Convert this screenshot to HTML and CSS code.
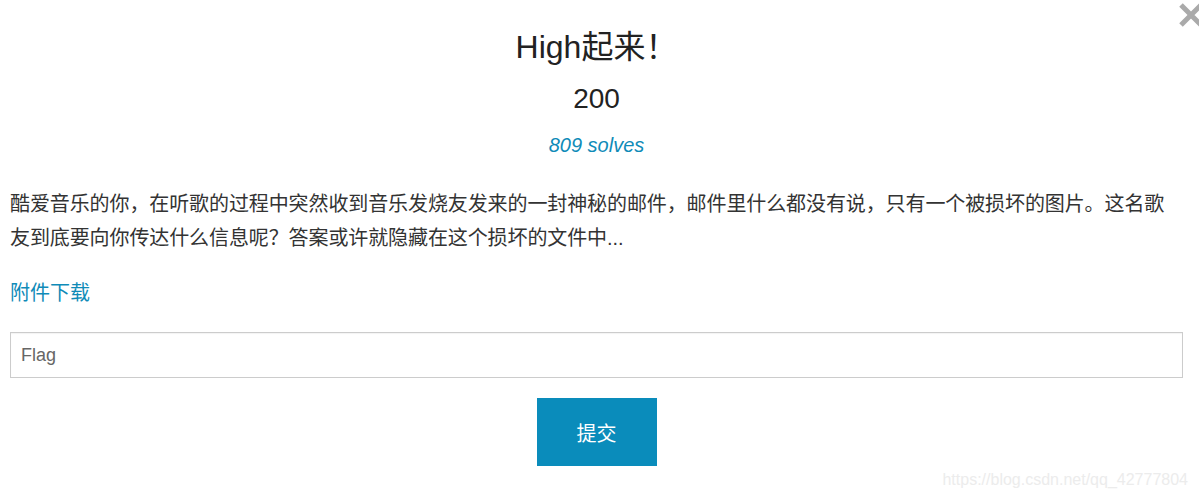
FILE: index.html
```html
<!DOCTYPE html>
<html>
<head>
  <meta charset="utf-8">
  <title>High起来!</title>
  <link rel="stylesheet" href="styles.css">
</head>
<body>
  <div class="modal">
    <a class="close" href="#" aria-label="close">
      <svg width="26" height="26" viewBox="0 0 26 26">
        <path d="M3 3 L23 23 M23 3 L3 23" stroke="#aaaaaa" stroke-width="5"/>
      </svg>
    </a>

    <div class="modal-body">
      <h3 class="chal-name">High起来！</h3>
      <h4 class="chal-value">200</h4>
      <p class="chal-solves">809 solves</p>

      <p class="chal-desc">酷爱音乐的你，在听歌的过程中突然收到音乐发烧友发来的一封神秘的邮件，邮件里什么都没有说，只有一个被损坏的图片。这名歌友到底要向你传达什么信息呢？答案或许就隐藏在这个损坏的文件中...</p>

      <p class="chal-files"><a href="#">附件下载</a></p>

      <input class="flag-input" type="text" placeholder="Flag">

      <div class="submit-row">
        <button class="submit-btn">提交</button>
      </div>
    </div>

    <div class="watermark">https://blog.csdn.net/qq_42777804</div>
  </div>
</body>
</html>
```

FILE: styles.css
```css
body {
  margin: 0;
  background: #fff;
  font-family: "Liberation Sans", "Noto Sans CJK SC", sans-serif;
  color: #222;
}

.modal {
  position: relative;
  height: 497px;
  overflow: hidden;
}

.close {
  position: absolute;
  top: 2px;
  right: -5px;
}

.modal-body {
  width: 1173px;
  padding: 27px 10px 0 10px;
  display: flex;
  flex-direction: column;
}

.chal-name {
  margin: 0;
  text-align: center;
  font-size: 32px;
  font-weight: normal;
  line-height: 40px;
}

.chal-value {
  margin: 15px 0 0 0;
  text-align: center;
  font-size: 28px;
  font-weight: normal;
  line-height: 34px;
}

.chal-solves {
  margin: 17px 0 0 0;
  text-align: center;
  font-size: 20px;
  font-style: italic;
  color: #0f8bb8;
  line-height: 24px;
}

.chal-desc {
  margin: 30px 0 0 0;
  font-size: 20px;
  letter-spacing: -0.1px;
  line-height: 34px;
  color: #333;
}

.chal-files {
  margin: 23px 0 0 0;
  font-size: 20px;
  line-height: 30px;
}

.chal-files a {
  color: #0f8bb8;
  text-decoration: none;
}

.flag-input {
  margin-top: 24px;
  height: 46px;
  box-sizing: border-box;
  border: 1px solid #cccccc;
  box-shadow: inset 0 1px 1px rgba(0, 0, 0, 0.05);
  padding: 0 10px;
  font-family: "Liberation Sans", "Noto Sans CJK SC", sans-serif;
  font-size: 18px;
  color: #555;
  outline: none;
}

.flag-input::placeholder {
  color: #666;
}

.submit-row {
  display: flex;
  justify-content: center;
  margin-top: 20px;
}

.submit-btn {
  width: 120px;
  height: 68px;
  border: none;
  background: #0a8cbb;
  color: #fff;
  font-family: "Liberation Sans", "Noto Sans CJK SC", sans-serif;
  font-size: 20px;
  cursor: pointer;
}

.watermark {
  position: absolute;
  right: 11px;
  bottom: 8px;
  font-size: 16px;
  color: #ececec;
}
```
